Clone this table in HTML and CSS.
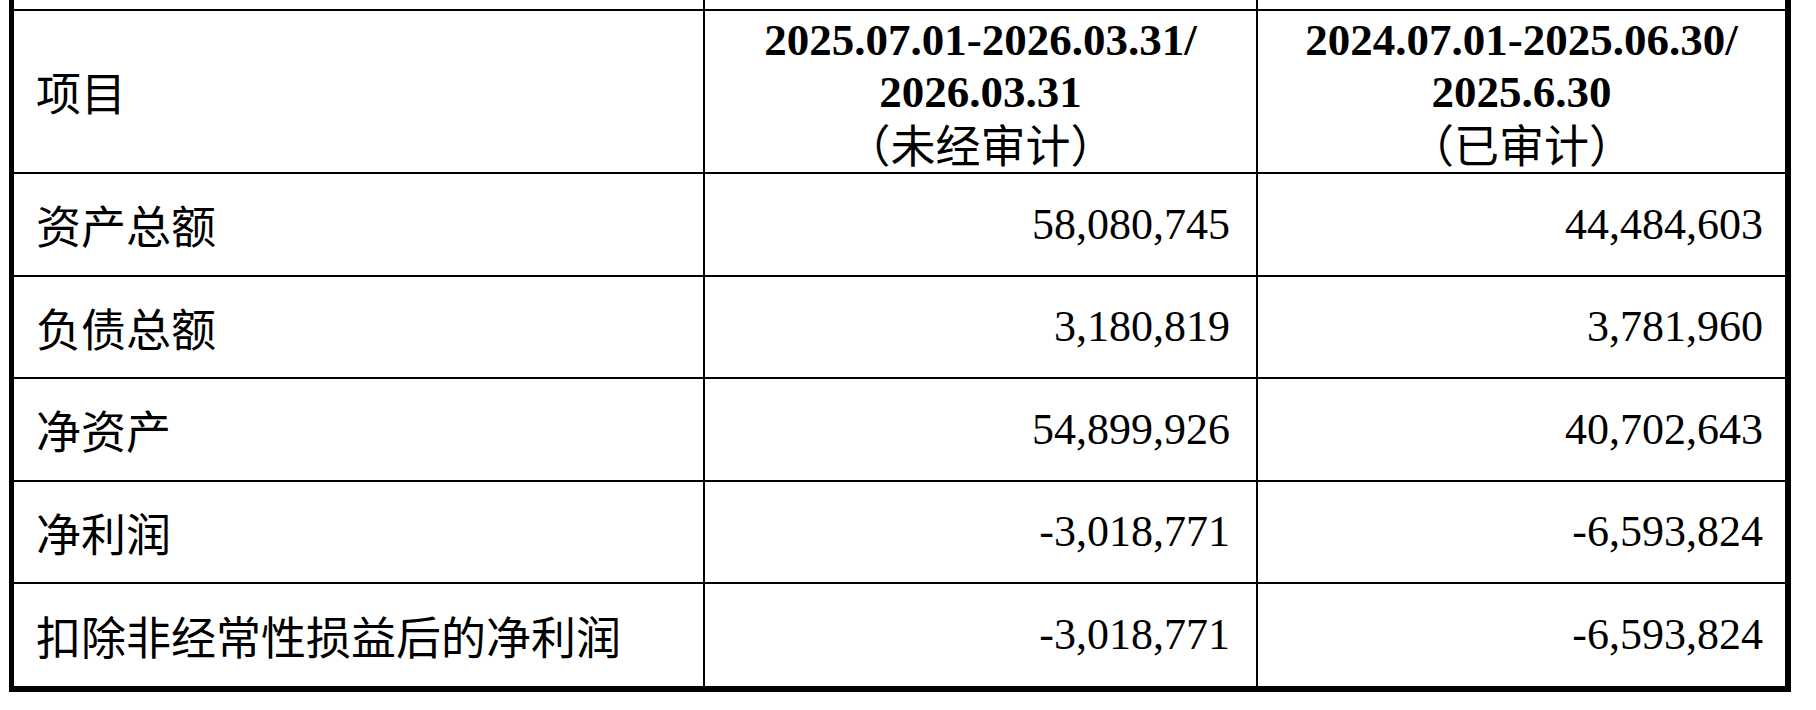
FILE: index.html
```html
<!DOCTYPE html>
<html lang="zh-CN">
<head>
<meta charset="utf-8">
<title>财务数据</title>
<link rel="stylesheet" href="styles.css">
</head>
<body>
<div class="sheet">
  <div class="cell stub"></div>
  <div class="cell stub"></div>
  <div class="cell stub last-col"></div>

  <div class="cell label">项目</div>
  <div class="cell head">
    <div class="b">2025.07.01-2026.03.31/</div>
    <div class="b">2026.03.31</div>
    <div class="cjk">（未经审计）</div>
  </div>
  <div class="cell head last-col">
    <div class="b">2024.07.01-2025.06.30/</div>
    <div class="b">2025.6.30</div>
    <div class="cjk">（已审计）</div>
  </div>

  <div class="cell label">资产总额</div>
  <div class="cell num c2">58,080,745</div>
  <div class="cell num c3 last-col">44,484,603</div>

  <div class="cell label">负债总额</div>
  <div class="cell num c2">3,180,819</div>
  <div class="cell num c3 last-col">3,781,960</div>

  <div class="cell label">净资产</div>
  <div class="cell num c2">54,899,926</div>
  <div class="cell num c3 last-col">40,702,643</div>

  <div class="cell label">净利润</div>
  <div class="cell num c2">-3,018,771</div>
  <div class="cell num c3 last-col">-6,593,824</div>

  <div class="cell label last-row">扣除非经常性损益后的净利润</div>
  <div class="cell num c2 last-row">-3,018,771</div>
  <div class="cell num c3 last-col last-row">-6,593,824</div>
</div>
</body>
</html>
```
FILE: styles.css
```css
html, body {
  margin: 0;
  padding: 0;
  background: #ffffff;
}

body {
  font-family: "Liberation Serif", "Noto Sans CJK SC", serif;
  color: #000000;
  font-size: 44px;
}

.sheet {
  margin-left: 9px;
  width: 1782px;
  box-sizing: border-box;
  display: grid;
  grid-template-columns: 691px 553px 527px;
  grid-template-rows: 11px 163px 103px 102px 103px 102px 102px;
  border-left: 5px solid #000;
  border-right: 6px solid #000;
  border-bottom: 6px solid #000;
}

.cell {
  box-sizing: border-box;
  border-right: 2px solid #000;
  border-bottom: 2px solid #000;
  display: flex;
  align-items: center;
  min-width: 0;
  white-space: nowrap;
}

.last-col {
  border-right: none;
}

.last-row {
  border-bottom: none;
}

.label {
  padding-left: 22px;
  font-family: "Noto Sans CJK SC", "Liberation Serif", sans-serif;
  font-size: 45px;
  line-height: 1;
}

.head {
  flex-direction: column;
  justify-content: center;
  align-items: center;
  line-height: 52px;
}

.head .b {
  font-weight: bold;
  font-family: "Liberation Serif", serif;
  font-size: 45px;
}

.head .cjk {
  font-family: "Noto Sans CJK SC", sans-serif;
  font-weight: normal;
  font-size: 45px;
}

.num {
  justify-content: flex-end;
  font-family: "Liberation Serif", serif;
  line-height: 1;
}

.c2 {
  padding-right: 26px;
}

.c3 {
  padding-right: 22px;
}
```
